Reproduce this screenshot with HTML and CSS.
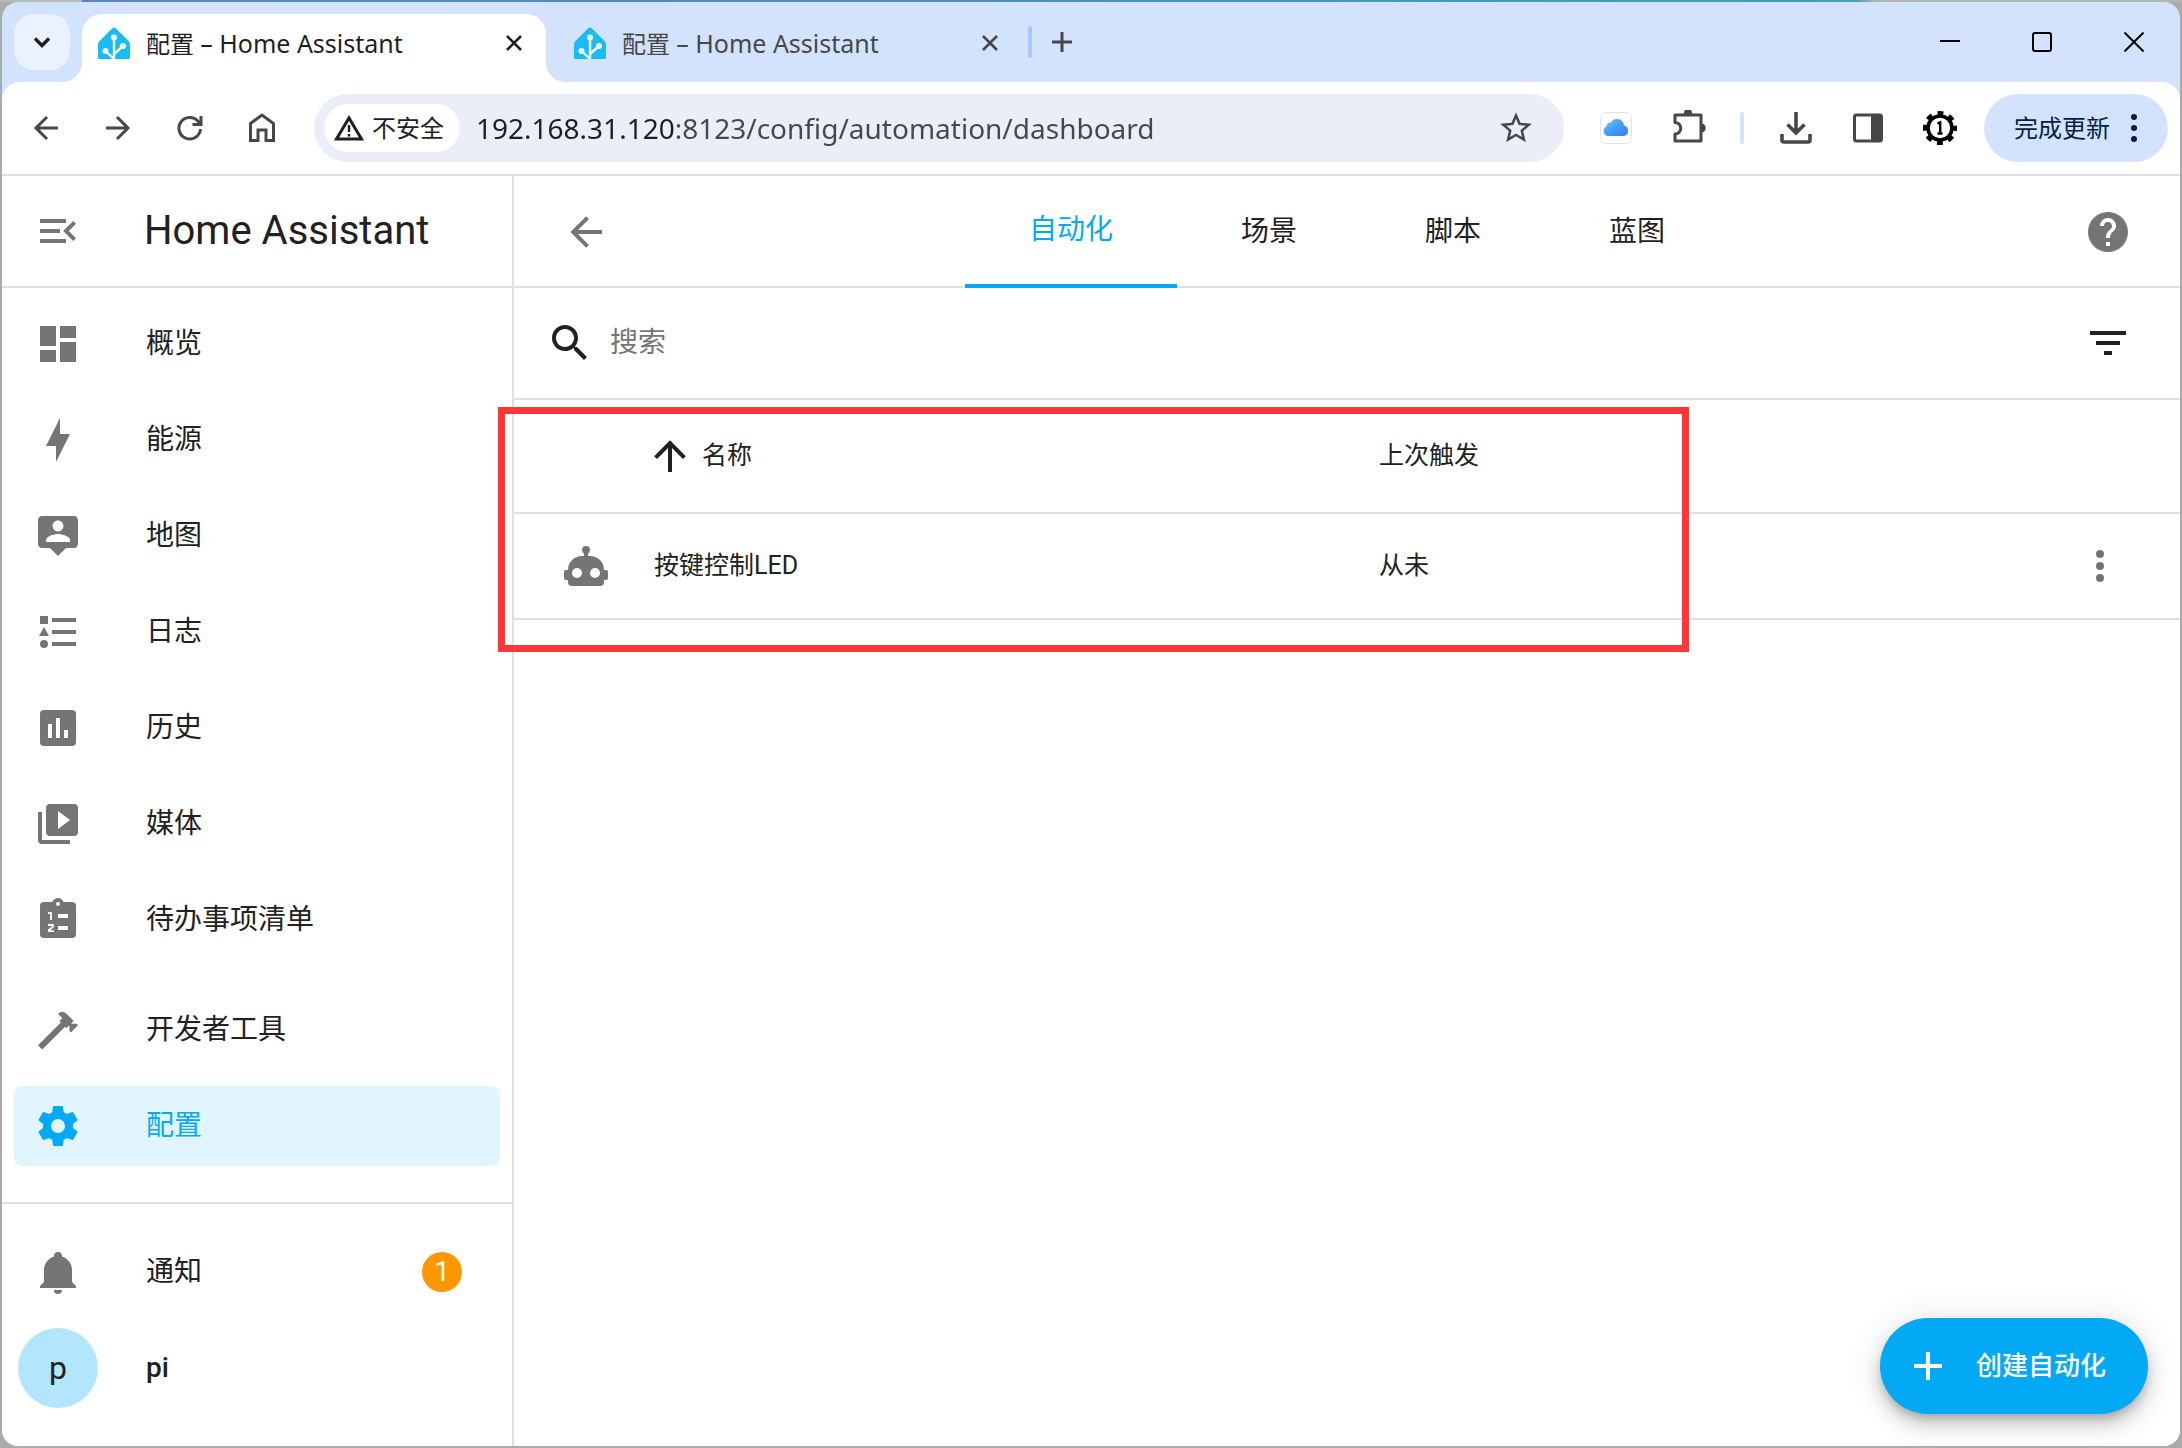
FILE: index.html
```html
<!DOCTYPE html>
<html lang="zh-CN">
<head>
<meta charset="utf-8">
<meta name="viewport" content="width=device-width, initial-scale=1">
<title>配置 – Home Assistant</title>
<link rel="stylesheet" href="styles.css">
</head>
<body>
<svg class="sprite" aria-hidden="true">
  <symbol id="logo" viewBox="0 0 32 32">
    <path fill="#18bcf2" d="M16 0.500Q17 0.500 18 1.500L30.500 14Q32 15.500 32 17.500V30.500Q32 32 30.500 32H1.500Q0 32 0 30.500V17.500Q0 15.500 1.500 14L14 1.500Q15 0.500 16 0.500Z"/>
    <path fill="none" stroke="#f2f4f9" stroke-width="2.400" d="M16 32V10M16 32L7 23.500M16 27L25.500 18.500"/>
    <circle cx="16" cy="10.500" r="3" fill="#f2f4f9"/><circle cx="7.500" cy="24" r="3" fill="#f2f4f9"/><circle cx="25" cy="19" r="3" fill="#f2f4f9"/>
  </symbol>
  <symbol id="close" viewBox="0 0 16 16"><path fill="none" stroke="currentColor" stroke-width="2.600" d="M1 1L15 15M15 1L1 15"/></symbol>
  <symbol id="arrow-left" viewBox="0 0 24 24"><path d="M20,11V13H8L13.5,18.5L12.08,19.92L4.16,12L12.08,4.08L13.5,5.5L8,11H20Z"/></symbol>
  <symbol id="dots" viewBox="0 0 24 24"><circle cx="12" cy="6" r="2"/><circle cx="12" cy="12" r="2"/><circle cx="12" cy="18" r="2"/></symbol>
</svg>

<div class="window">
  <header class="tabstrip">
    <button class="tab-search" aria-label="搜索标签页"><svg width="20" height="20" viewBox="0 0 20 20"><path fill="none" stroke="currentColor" stroke-width="3.400" d="M3 6.500L10 13.500L17 6.500"/></svg></button>
    <div class="tab tab-active">
      <svg class="favicon"><use href="#logo"/></svg>
      <span class="tab-title">配置 <span class="latin">– Home Assistant</span></span>
      <button class="tab-close" aria-label="关闭"><svg width="16" height="16"><use href="#close"/></svg></button>
    </div>
    <div class="tab">
      <svg class="favicon"><use href="#logo"/></svg>
      <span class="tab-title">配置 <span class="latin">– Home Assistant</span></span>
      <button class="tab-close" aria-label="关闭"><svg width="16" height="16"><use href="#close"/></svg></button>
    </div>
    <span class="tab-separator"></span>
    <button class="new-tab" aria-label="新标签页"><svg width="20" height="20" viewBox="0 0 20 20"><path fill="none" stroke="currentColor" stroke-width="3" d="M10 0V20M0 10H20"/></svg></button>
    <div class="window-controls">
      <button aria-label="最小化"><svg width="20" height="20" viewBox="0 0 20 20"><path fill="none" stroke="currentColor" stroke-width="2" d="M0 9H20"/></svg></button>
      <button aria-label="最大化"><svg width="20" height="20" viewBox="0 0 20 20"><rect x="1" y="1" width="18" height="18" rx="2" fill="none" stroke="currentColor" stroke-width="2"/></svg></button>
      <button aria-label="关闭窗口"><svg width="20" height="20" viewBox="0 0 20 20"><path fill="none" stroke="currentColor" stroke-width="2" d="M0.500 0.500L19.500 19.500M19.500 0.500L0.500 19.500"/></svg></button>
    </div>
  </header>

  <div class="toolbar">
    <button aria-label="后退"><svg width="32" height="32" viewBox="0 0 32 32"><path fill="none" stroke="currentColor" stroke-width="3" d="M28 16H6M17 5L6 16L17 27"/></svg></button>
    <button aria-label="前进"><svg width="32" height="32" viewBox="0 0 32 32"><path fill="none" stroke="currentColor" stroke-width="3" d="M4 16H26M15 5L26 16L15 27"/></svg></button>
    <button aria-label="刷新"><svg width="32" height="32" viewBox="0 0 32 32"><path fill="none" stroke="currentColor" stroke-width="3" d="M26.500 17A10.800 10.800 0 1 1 24 9.300L26.500 11.500M27 4V12.500H18.500"/></svg></button>
    <button aria-label="主页"><svg width="32" height="32" viewBox="0 0 32 32"><path fill="none" stroke="currentColor" stroke-width="3" d="M4.500 28.500V11.500L16 3L27.500 11.500V28.500H20V18H12V28.500Z"/></svg></button>
    <div class="omnibox">
      <button class="security"><svg width="30" height="28" viewBox="0 0 30 28"><path fill="none" stroke="currentColor" stroke-width="3" d="M15 4L27.500 25H2.500Z"/><path stroke="currentColor" stroke-width="2.400" d="M15 11V18M15 20V22.500"/></svg>不安全</button>
      <input class="url" type="text" aria-label="地址" value="192.168.31.120:8123/config/automation/dashboard">
      <button class="star" aria-label="收藏"><svg width="38" height="38" viewBox="0 0 24 24"><path fill-rule="evenodd" d="M22 9.240l-7.190-.62L12 2 9.190 8.630 2 9.240l5.460 4.730L5.820 21 12 17.270 18.180 21l-1.630-7.030L22 9.240zM12 15.400l-3.760 2.270 1-4.280-3.320-2.880 4.380-.38L12 6.100l1.710 4.040 4.380.38-3.320 2.880 1 4.280L12 15.400z"/></svg></button>
    </div>
    <div class="extensions">
      <button aria-label="iCloud"><svg width="32" height="32" viewBox="0 0 32 32"><defs><linearGradient id="sky" x1="0" y1="0" x2="1" y2="1"><stop offset="0" stop-color="#6cc6fa"/><stop offset=".5" stop-color="#3f9ff6"/><stop offset="1" stop-color="#3d7cf4"/></linearGradient></defs><rect x="0.500" y="0.500" width="31" height="31" rx="5" fill="#fff" stroke="#e3e3e6"/><path fill="url(#sky)" d="M8.500 24A5 5 0 0 1 6.500 14.500A4 4 0 0 1 11 10.500A7 7 0 0 1 24 13.500A5.400 5.400 0 0 1 24 24Z"/></svg></button>
      <button aria-label="扩展程序"><svg width="36" height="36" viewBox="0 0 36 36"><path fill="none" stroke="currentColor" stroke-width="3" stroke-linejoin="round" d="M5 5H31V31H5V24A5.500 5.500 0 0 0 5 12.500Z"/><path d="M14 4V3A4 4 0 0 1 22 3V4ZM32 13.500A4.600 4.600 0 0 1 32 22.500Z"/></svg></button>
      <span class="toolbar-separator"></span>
      <button aria-label="下载"><svg width="32" height="32" viewBox="0 0 32 32"><path fill="none" stroke="currentColor" stroke-width="3.600" d="M16 0V21M7.500 12.500L16 21L24.500 12.500M2 22V28Q2 30 4 30H28Q30 30 30 28V22"/></svg></button>
      <button aria-label="侧边栏"><svg width="30" height="30" viewBox="0 0 30 30"><rect x="1.500" y="2" width="27" height="26" rx="2" fill="none" stroke="currentColor" stroke-width="3"/><path d="M18 2H28V28H18Z"/></svg></button>
      <button class="profile" aria-label="用户"><svg width="36" height="36" viewBox="0 0 36 36"><circle cx="18" cy="18" r="15" fill="none" stroke="currentColor" stroke-width="4" stroke-dasharray="5.890 5.891" stroke-dashoffset="2.945"/><circle cx="18" cy="18" r="12" fill="none" stroke="currentColor" stroke-width="3.600"/><path fill="none" stroke="currentColor" stroke-width="2.400" d="M15.500 13.500L18.200 12.500V23.500M15.500 23.500H20.500"/></svg></button>
      <button class="update">完成更新<svg width="48" height="44" viewBox="0 0 48 44"><circle cx="24" cy="11" r="3"/><circle cx="24" cy="22" r="3"/><circle cx="24" cy="33" r="3"/></svg></button>
    </div>
  </div>

  <div class="app">
    <aside class="sidebar">
      <div class="sidebar-header">
        <button aria-label="收起侧边栏"><svg class="icon" viewBox="0 0 24 24"><path d="M21,15.610L19.590,17L14.580,12L19.590,7L21,8.390L17.440,12L21,15.610M3,6H16V8H3V6M3,13V11H13V13H3M3,18V16H16V18H3Z"/></svg></button>
        <h1>Home Assistant</h1>
      </div>
      <nav class="nav">
        <a class="item" href="#overview"><svg class="icon" viewBox="0 0 24 24"><path d="M13,3V9H21V3M13,21H21V11H13M3,21H11V15H3M3,13H11V3H3V13Z"/></svg>概览</a>
        <a class="item" href="#energy"><svg class="icon" viewBox="0 0 24 24"><path d="M11 15H6L13 1V9H18L11 23V15Z"/></svg>能源</a>
        <a class="item" href="#map"><svg class="icon" viewBox="0 0 24 24"><path d="M20 2H4C2.890 2 2 2.890 2 4V16C2 17.110 2.900 18 4 18H8L12 22L16 18H20C21.110 18 22 17.110 22 16V4C22 2.890 21.100 2 20 2M12 4.300C13.500 4.300 14.700 5.500 14.700 7S13.500 9.700 12 9.700 9.300 8.500 9.300 7 10.500 4.300 12 4.300M18 15H6V14.100C6 12.100 10 11 12 11S18 12.100 18 14.100V15Z"/></svg>地图</a>
        <a class="item" href="#logbook"><svg class="icon" viewBox="0 0 24 24"><path d="M5,9.500L7.500,14H2.500L5,9.500M3,4H7V8H3V4M5,20A2,2 0 0,0 7,18A2,2 0 0,0 5,16A2,2 0 0,0 3,18A2,2 0 0,0 5,20M9,5V7H21V5H9M9,19H21V17H9V19M9,11V13H21V11H9Z"/></svg>日志</a>
        <a class="item" href="#history"><svg class="icon" viewBox="0 0 24 24"><path d="M9,17H7V10H9V17M13,17H11V7H13V17M17,17H15V13H17V17M19,3H5A2,2 0 0,0 3,5V19A2,2 0 0,0 5,21H19A2,2 0 0,0 21,19V5A2,2 0 0,0 19,3Z"/></svg>历史</a>
        <a class="item" href="#media"><svg class="icon" viewBox="0 0 24 24"><path d="M4,6H2V20A2,2 0 0,0 4,22H18V20H4V6M20,2H8A2,2 0 0,0 6,4V16A2,2 0 0,0 8,18H20A2,2 0 0,0 22,16V4A2,2 0 0,0 20,2M12,14.500V5.500L18,10L12,14.500Z"/></svg>媒体</a>
        <a class="item" href="#todo"><svg class="icon" viewBox="0 0 24 24"><path fill-rule="evenodd" d="M19,3H14.820C14.400,1.840 13.300,1 12,1S9.600,1.840 9.180,3H5A2,2 0 0,0 3,5V19A2,2 0 0,0 5,21H19A2,2 0 0,0 21,19V5A2,2 0 0,0 19,3M12,3A1,1 0 0,1 12,5A1,1 0 0,1 12,3M12,9H17V11H12M12,15H17V17H12"/><path fill="none" stroke="#fff" stroke-width="0.900" d="M7 8.500H8.500V12M7 14.500H9.500V15.300L7.500 17V17.600H10"/></svg>待办事项清单</a>
        <div class="nav-tools">
          <a class="item" href="#developer-tools"><svg class="icon" viewBox="0 0 24 24"><path d="M2 19.630L13.430 8.200L12.720 7.500L14.140 6.070L12 3.890C13.200 2.700 15.090 2.700 16.270 3.890L19.870 7.500L18.450 8.910H21.290L22 9.620L18.450 13.210L17.740 12.500V9.620L16.270 11.040L15.560 10.330L4.130 21.760L2 19.630Z"/></svg>开发者工具</a>
          <a class="item item-selected" href="#config" aria-current="page"><svg class="icon" viewBox="0 0 24 24"><path d="M12,15.500A3.500,3.500 0 0,1 8.500,12A3.500,3.500 0 0,1 12,8.500A3.500,3.500 0 0,1 15.500,12A3.500,3.500 0 0,1 12,15.500M19.430,12.970C19.470,12.650 19.500,12.330 19.500,12C19.500,11.670 19.470,11.340 19.430,11L21.540,9.370C21.730,9.220 21.780,8.950 21.660,8.730L19.660,5.270C19.540,5.050 19.270,4.960 19.050,5.050L16.560,6.050C16.040,5.660 15.500,5.320 14.870,5.070L14.500,2.420C14.460,2.180 14.250,2 14,2H10C9.750,2 9.540,2.180 9.500,2.420L9.130,5.070C8.500,5.320 7.960,5.660 7.440,6.050L4.950,5.050C4.730,4.960 4.460,5.050 4.340,5.270L2.340,8.730C2.210,8.950 2.270,9.220 2.460,9.370L4.570,11C4.530,11.340 4.500,11.670 4.500,12C4.500,12.330 4.530,12.650 4.570,12.970L2.460,14.630C2.270,14.780 2.210,15.050 2.340,15.270L4.340,18.730C4.460,18.950 4.730,19.030 4.950,18.950L7.440,17.940C7.960,18.340 8.500,18.680 9.130,18.930L9.500,21.580C9.540,21.820 9.750,22 10,22H14C14.250,22 14.460,21.820 14.500,21.580L14.870,18.930C15.500,18.670 16.040,18.340 16.560,17.940L19.050,18.950C19.270,19.030 19.540,18.950 19.660,18.730L21.660,15.270C21.780,15.050 21.730,14.780 21.540,14.630L19.430,12.970Z"/></svg>配置</a>
        </div>
      </nav>
      <div class="sidebar-footer">
        <a class="item" href="#notifications"><svg class="icon" viewBox="0 0 24 24"><path d="M21,19V20H3V19L5,17V11C5,7.900 7.030,5.170 10,4.290C10,4.190 10,4.100 10,4A2,2 0 0,1 12,2A2,2 0 0,1 14,4C14,4.100 14,4.190 14,4.290C16.970,5.170 19,7.900 19,11V17L21,19M14,21A2,2 0 0,1 12,23A2,2 0 0,1 10,21"/></svg>通知<span class="badge">1</span></a>
        <a class="item item-user" href="#profile"><span class="avatar">p</span>pi</a>
      </div>
    </aside>

    <main class="content">
      <div class="content-header">
        <button aria-label="返回"><svg class="icon"><use href="#arrow-left"/></svg></button>
        <nav class="sections">
          <a class="section section-active" href="#automation">自动化</a>
          <a class="section" href="#scene">场景</a>
          <a class="section" href="#script">脚本</a>
          <a class="section" href="#blueprint">蓝图</a>
        </nav>
        <button class="help" aria-label="帮助"><svg class="icon" viewBox="0 0 24 24"><path d="M15.070,11.250L14.170,12.170C13.450,12.890 13,13.500 13,15H11V14.500C11,13.390 11.450,12.390 12.170,11.670L13.410,10.410C13.780,10.050 14,9.550 14,9C14,7.890 13.100,7 12,7A2,2 0 0,0 10,9H8A4,4 0 0,1 12,5A4,4 0 0,1 16,9C16,9.880 15.640,10.670 15.070,11.250M13,19H11V17H13M12,2A10,10 0 0,0 2,12A10,10 0 0,0 12,22A10,10 0 0,0 22,12C22,6.470 17.500,2 12,2Z"/></svg></button>
      </div>
      <div class="search">
        <label for="search" aria-label="搜索"><svg class="icon" viewBox="0 0 24 24"><path d="M9.500,3A6.500,6.500 0 0,1 16,9.500C16,11.110 15.410,12.590 14.440,13.730L14.710,14H15.500L20.500,19L19,20.500L14,15.500V14.710L13.730,14.440C12.590,15.410 11.110,16 9.500,16A6.500,6.500 0 0,1 3,9.500A6.500,6.500 0 0,1 9.500,3M9.500,5C7,5 5,7 5,9.500C5,12 7,14 9.500,14C12,14 14,12 14,9.500C14,7 12,5 9.500,5Z"/></svg></label>
        <input id="search" type="text" placeholder="搜索">
        <button aria-label="筛选"><svg class="icon" viewBox="0 0 24 24"><path d="M6,13H18V11H6M3,6V8H21V6M10,18H14V16H10V18Z"/></svg></button>
      </div>
      <div class="table-area">
        <table>
          <thead>
            <tr>
              <th class="col-icon"></th>
              <th class="col-name"><span class="sort"><svg width="48" height="48" viewBox="0 0 24 24"><path d="M13,20H11V8L5.500,13.500L4.080,12.080L12,4.160L19.920,12.080L18.500,13.500L13,8V20Z"/></svg>名称</span></th>
              <th class="col-last">上次触发</th>
              <th class="col-menu"></th>
            </tr>
          </thead>
          <tbody>
            <tr>
              <td class="col-icon"><svg class="icon" viewBox="0 0 24 24"><path d="M12,2A2,2 0 0,1 14,4C14,4.740 13.600,5.390 13,5.730V7H14A7,7 0 0,1 21,14H22A1,1 0 0,1 23,15V18A1,1 0 0,1 22,19H21V20A2,2 0 0,1 19,22H5A2,2 0 0,1 3,20V19H2A1,1 0 0,1 1,18V15A1,1 0 0,1 2,14H3A7,7 0 0,1 10,7H11V5.730C10.400,5.390 10,4.740 10,4A2,2 0 0,1 12,2M7.500,13A2.500,2.500 0 0,0 5,15.500A2.500,2.500 0 0,0 7.500,18A2.500,2.500 0 0,0 10,15.500A2.500,2.500 0 0,0 7.500,13M16.500,13A2.500,2.500 0 0,0 14,15.500A2.500,2.500 0 0,0 16.500,18A2.500,2.500 0 0,0 19,15.500A2.500,2.500 0 0,0 16.500,13Z"/></svg></td>
              <td class="col-name">按键控制LED</td>
              <td class="col-last">从未</td>
              <td class="col-menu"><button aria-label="更多"><svg class="icon"><use href="#dots"/></svg></button></td>
            </tr>
          </tbody>
        </table>
        <div class="highlight"></div>
      </div>
      <button class="fab"><svg width="48" height="48" viewBox="0 0 24 24"><path d="M19,13H13V19H11V13H5V11H11V5H13V11H19V13Z"/></svg>创建自动化</button>
    </main>
  </div>
</div>
</body>
</html>
```
FILE: styles.css
```css
:root {
  --strip: #d3e3fd;
  --divider: #e0e0e0;
  --text: #212121;
  --muted: #757575;
  --primary: #03a9f4;
  --ui-font: "Noto Sans", "Noto Sans CJK SC", sans-serif;
}

* {
  box-sizing: border-box;
}

body {
  margin: 0;
  padding: 2px;
  min-height: 100vh;
  display: flex;
  background:
    linear-gradient(90deg, #b9b9b9 82px, #5c84bf 82px, #4a90b6 45%, #43a0b6 85%, #b5b5b5 86%) top / 100% 2px no-repeat,
    #ababab;
  color: var(--text);
  font: 28px/40px Roboto, "Noto Sans CJK SC", sans-serif;
}

button {
  display: flex;
  align-items: center;
  justify-content: center;
  padding: 0;
  border: 0;
  background: none;
  color: inherit;
  font: inherit;
}

a {
  color: inherit;
  text-decoration: none;
}

svg {
  flex: none;
  display: block;
  fill: currentColor;
}

input {
  flex: 1;
  min-width: 0;
  padding: 0;
  border: 0;
  outline: 0;
  background: none;
  font: inherit;
}

.sprite {
  position: absolute;
  width: 0;
  height: 0;
}

.icon {
  width: 48px;
  height: 48px;
}

.window {
  flex: 1;
  min-width: 0;
  display: flex;
  flex-direction: column;
  overflow: hidden;
  border-radius: 16px;
  background: var(--strip);
}

/* Tab strip */
.tabstrip {
  height: 80px;
  display: flex;
  align-items: center;
  padding-left: 12px;
  color: #474747;
  font: 24px/32px var(--ui-font);
}

.tab-search {
  width: 56px;
  height: 56px;
  border-radius: 20px;
  background: #ebf2ff;
  color: #1f1f1f;
}

.tab {
  position: relative;
  width: 464px;
  height: 68px;
  display: flex;
  align-items: center;
  gap: 16px;
  margin-top: 12px;
  padding: 0 16px 10px;
}

.tab-search + .tab {
  margin-left: 12px;
}

.tab + .tab {
  margin-left: 12px;
}

.tab-active {
  border-radius: 20px 20px 0 0;
  background: #fff;
  color: #1f1f1f;
}

.tab-active::before,
.tab-active::after {
  content: "";
  position: absolute;
  bottom: 0;
  width: 20px;
  height: 20px;
}

.tab-active::before {
  right: 100%;
  background: radial-gradient(circle at 0 0, transparent 20px, #fff 20px);
}

.tab-active::after {
  left: 100%;
  background: radial-gradient(circle at 100% 0, transparent 20px, #fff 20px);
}

.favicon {
  width: 32px;
  height: 32px;
}

.tab-title {
  flex: 1;
  white-space: nowrap;
}

.latin {
  font-size: 25px;
}

.tab-close {
  width: 32px;
  height: 32px;
}

.tab-separator {
  width: 4px;
  height: 32px;
  margin: 0 20px 0 6px;
  border-radius: 2px;
  background: #a8c7fa;
}

.window-controls {
  display: flex;
  margin-left: auto;
  color: #000;
}

.window-controls button {
  width: 92px;
  height: 80px;
}

/* Toolbar */
.toolbar {
  height: 94px;
  display: flex;
  align-items: center;
  padding: 0 12px 2px 8px;
  border-radius: 18px 18px 0 0;
  box-shadow: inset 0 -2px var(--divider);
  background: #fff;
  color: #474747;
  font: 24px/32px var(--ui-font);
}

.toolbar > button {
  width: 72px;
  height: 68px;
}

.omnibox {
  flex: 1;
  height: 68px;
  display: flex;
  align-items: center;
  margin-left: 16px;
  padding: 0 29px 0 10px;
  border-radius: 34px;
  background: #ebeef8;
}

.security {
  width: 136px;
  height: 48px;
  gap: 8px;
  padding-right: 6px;
  border-radius: 24px;
  background: #fff;
  color: #1f1f1f;
}

.url {
  height: 48px;
  margin-left: 16px;
  background: linear-gradient(90deg, #1f1f1f 200px, #474747 200px);
  background-clip: text;
  color: transparent;
  font-size: 28px;
  line-height: 48px;
}

.extensions {
  display: flex;
  align-items: center;
  margin-left: 16px;
}

.extensions button {
  width: 72px;
  height: 68px;
}

.toolbar-separator {
  width: 4px;
  height: 32px;
  margin: 0 16px;
  border-radius: 2px;
  background: var(--strip);
}

.extensions .profile {
  color: #000;
}

.extensions .update {
  width: 184px;
  margin-left: 8px;
  padding-left: 20px;
  border-radius: 34px;
  background: var(--strip);
  color: #041e49;
}

/* Sidebar */
.app {
  flex: 1;
  display: flex;
  background: #fff;
}

.sidebar {
  width: 512px;
  display: flex;
  flex-direction: column;
  border-right: 2px solid var(--divider);
}

.sidebar-header {
  height: 112px;
  display: flex;
  align-items: center;
  gap: 62px;
  padding-left: 32px;
  border-bottom: 2px solid var(--divider);
}

.sidebar-header button {
  color: var(--muted);
}

h1 {
  margin: 0;
  font-size: 40px;
  font-weight: 400;
}

.nav {
  flex: 1;
  display: flex;
  flex-direction: column;
  gap: 16px;
  padding: 16px 12px 36px;
}

.nav-tools {
  display: flex;
  flex-direction: column;
  gap: 16px;
  margin-top: auto;
}

.item {
  height: 80px;
  display: flex;
  align-items: center;
  gap: 64px;
  padding: 0 38px 0 20px;
  border-radius: 8px;
}

.item .icon {
  color: var(--muted);
}

.item-selected {
  background: #e1f5fe;
}

.item-selected,
.item-selected .icon {
  color: var(--primary);
}

.sidebar-footer {
  display: flex;
  flex-direction: column;
  gap: 16px;
  padding: 28px 12px 38px;
  border-top: 2px solid var(--divider);
}

.badge {
  width: 40px;
  height: 40px;
  margin-left: auto;
  border-radius: 50%;
  background: #ff9800;
  color: #fff;
  text-align: center;
}

.item-user {
  gap: 48px;
  padding-left: 4px;
  font-weight: 500;
}

.avatar {
  width: 80px;
  border-radius: 50%;
  background: #b3e5fc;
  font-size: 32px;
  font-weight: 400;
  line-height: 80px;
  text-align: center;
}

/* Content */
.content {
  position: relative;
  flex: 1;
  min-width: 0;
}

.content-header {
  height: 112px;
  display: grid;
  grid-template-columns: 1fr auto 1fr;
  align-items: center;
  padding: 0 48px;
  border-bottom: 2px solid var(--divider);
}

.content-header button {
  justify-self: start;
  color: var(--muted);
}

.content-header .help {
  justify-self: end;
}

.sections {
  display: flex;
}

.section {
  height: 112px;
  padding: 0 64px;
  line-height: 112px;
}

.section-active {
  border-bottom: 4px solid var(--primary);
  color: var(--primary);
  line-height: 108px;
}

.search {
  height: 112px;
  display: flex;
  align-items: center;
  gap: 16px;
  padding: 0 48px 0 32px;
  border-bottom: 2px solid var(--divider);
}

.search input::placeholder {
  color: var(--muted);
  opacity: 1;
}

.table-area {
  position: relative;
}

table {
  width: 100%;
  table-layout: fixed;
  border-collapse: separate;
  border-spacing: 0;
  font-size: 25px;
}

th,
td {
  height: 106px;
  padding: 0 16px;
  border-bottom: 2px solid var(--divider);
  font-weight: 400;
  text-align: left;
}

th {
  height: 114px;
}

.col-icon {
  width: 124px;
  padding: 0 0 0 48px;
}

.col-icon,
.col-menu {
  color: var(--muted);
}

.col-last {
  width: 657px;
}

.col-menu {
  width: 160px;
}

.col-menu button {
  width: 100%;
}

.sort {
  display: flex;
  align-items: center;
  margin-left: -8px;
}

.sort svg {
  margin-right: 8px;
}

/* Callout frame laid over the table */
.highlight {
  position: absolute;
  top: 7px;
  left: -16px;
  width: 1191px;
  height: 245px;
  border: 7px solid #fc3737;
}

.fab {
  position: absolute;
  right: 32px;
  bottom: 32px;
  height: 96px;
  gap: 24px;
  padding: 0 42px 0 24px;
  border-radius: 48px;
  box-shadow: 0 6px 10px -2px rgb(0 0 0 / 20%), 0 12px 20px rgb(0 0 0 / 14%), 0 2px 36px rgb(0 0 0 / 12%);
  background: var(--primary);
  color: #fff;
  font-size: 26px;
  font-weight: 500;
}
```
